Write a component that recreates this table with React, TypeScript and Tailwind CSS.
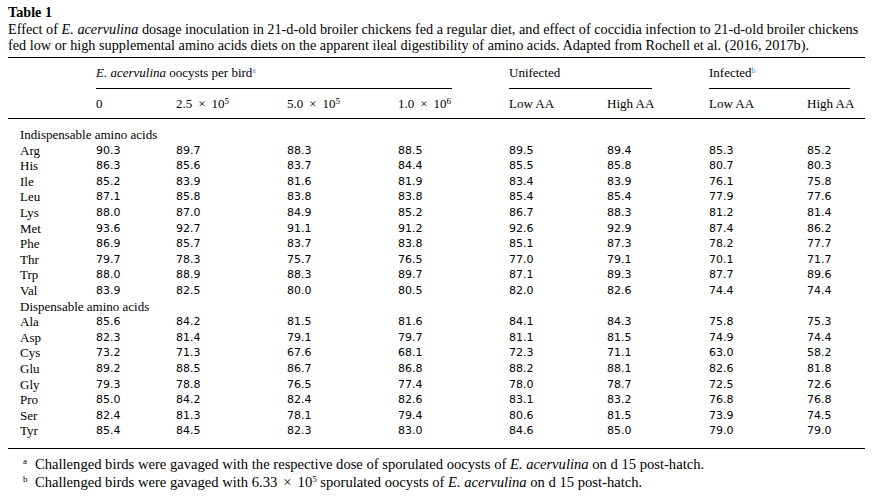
const serif = "font-['Liberation_Serif','Times_New_Roman',serif]";
const sans = "font-['DejaVu_Sans','Verdana',sans-serif]";

const cols = "grid grid-cols-[88px_80px_111px_111px_111px_98px_102px_98px_56px]";

type Row = { label: string; values?: string[] };

const rows: Row[] = [
  { label: "Indispensable amino acids" },
  { label: "Arg", values: ["90.3", "89.7", "88.3", "88.5", "89.5", "89.4", "85.3", "85.2"] },
  { label: "His", values: ["86.3", "85.6", "83.7", "84.4", "85.5", "85.8", "80.7", "80.3"] },
  { label: "Ile", values: ["85.2", "83.9", "81.6", "81.9", "83.4", "83.9", "76.1", "75.8"] },
  { label: "Leu", values: ["87.1", "85.8", "83.8", "83.8", "85.4", "85.4", "77.9", "77.6"] },
  { label: "Lys", values: ["88.0", "87.0", "84.9", "85.2", "86.7", "88.3", "81.2", "81.4"] },
  { label: "Met", values: ["93.6", "92.7", "91.1", "91.2", "92.6", "92.9", "87.4", "86.2"] },
  { label: "Phe", values: ["86.9", "85.7", "83.7", "83.8", "85.1", "87.3", "78.2", "77.7"] },
  { label: "Thr", values: ["79.7", "78.3", "75.7", "76.5", "77.0", "79.1", "70.1", "71.7"] },
  { label: "Trp", values: ["88.0", "88.9", "88.3", "89.7", "87.1", "89.3", "87.7", "89.6"] },
  { label: "Val", values: ["83.9", "82.5", "80.0", "80.5", "82.0", "82.6", "74.4", "74.4"] },
  { label: "Dispensable amino acids" },
  { label: "Ala", values: ["85.6", "84.2", "81.5", "81.6", "84.1", "84.3", "75.8", "75.3"] },
  { label: "Asp", values: ["82.3", "81.4", "79.1", "79.7", "81.1", "81.5", "74.9", "74.4"] },
  { label: "Cys", values: ["73.2", "71.3", "67.6", "68.1", "72.3", "71.1", "63.0", "58.2"] },
  { label: "Glu", values: ["89.2", "88.5", "86.7", "86.8", "88.2", "88.1", "82.6", "81.8"] },
  { label: "Gly", values: ["79.3", "78.8", "76.5", "77.4", "78.0", "78.7", "72.5", "72.6"] },
  { label: "Pro", values: ["85.0", "84.2", "82.4", "82.6", "83.1", "83.2", "76.8", "76.8"] },
  { label: "Ser", values: ["82.4", "81.3", "78.1", "79.4", "80.6", "81.5", "73.9", "74.5"] },
  { label: "Tyr", values: ["85.4", "84.5", "82.3", "83.0", "84.6", "85.0", "79.0", "79.0"] },
];

function Pow({ base, exp }: { base: string; exp: string }) {
  return (
    <span className="whitespace-nowrap">
      {base}
      <span className="mx-[6px]">×</span>
      10<sup className="text-[9px]">{exp}</sup>
    </span>
  );
}

export default function App() {
  return (
    <div className={`w-[875px] h-[499px] bg-white text-black ${serif} text-[13px] px-[8px] pt-[4px] overflow-hidden`}>
      <div className="w-[857px]">
        {/* caption */}
        <div className="text-[14.2px] font-bold leading-[17px]">Table 1</div>
        <div className="text-[14.25px] leading-[16px] whitespace-nowrap">
          <div>
            Effect of <i>E. acervulina</i> dosage inoculation in 21-d-old broiler chickens fed a regular diet, and effect of coccidia infection to 21-d-old broiler chickens
          </div>
          <div>
            fed low or high supplemental amino acids diets on the apparent ileal digestibility of amino acids. Adapted from Rochell et al. (2016, 2017b).
          </div>
        </div>

        {/* table */}
        <div className="mt-[4px] border-t border-black">
          <div className={`${cols} pt-[7px]`}>
            <div />
            <div className="col-span-4 mr-[57px]">
              <div className="leading-[16px] h-[16px]">
                <i>E. acervulina</i> oocysts per bird<sup className="text-[8px] text-[#5b8fc7]">a</sup>
              </div>
              <div className="mt-[7px] border-t border-black" />
            </div>
            <div className="col-span-2 mr-[57px]">
              <div className="leading-[16px] h-[16px]">Unifected</div>
              <div className="mt-[7px] border-t border-black" />
            </div>
            <div className="col-span-2 mr-[13px]">
              <div className="leading-[16px] h-[16px]">
                Infected<sup className="text-[8px] text-[#5b8fc7]">b</sup>
              </div>
              <div className="mt-[7px] border-t border-black" />
            </div>
          </div>

          <div className={`${cols} pt-[7px] pb-[6px] leading-[16px] border-b border-black`}>
            <div />
            <div>0</div>
            <Pow base="2.5" exp="5" />
            <Pow base="5.0" exp="5" />
            <Pow base="1.0" exp="6" />
            <div>Low AA</div>
            <div>High AA</div>
            <div>Low AA</div>
            <div>High AA</div>
          </div>

          <div className="pt-[8px] pb-[9px] border-b border-black">
            {rows.map((r) =>
              r.values ? (
                <div key={r.label} className={`${cols} h-[15.6px] leading-[15.6px]`}>
                  <div className="pl-[12px]">{r.label}</div>
                  {r.values.map((v, i) => (
                    <div key={i} className={`${sans} text-[11px]`}>
                      {v}
                    </div>
                  ))}
                </div>
              ) : (
                <div key={r.label} className="h-[15.6px] leading-[15.6px] pl-[12px] whitespace-nowrap">
                  {r.label}
                </div>
              )
            )}
          </div>
        </div>

        {/* footnotes */}
        <div className="pt-[6px] text-[14.6px] leading-[18px] whitespace-nowrap">
          <div>
            <span className="inline-block w-[27px] pl-[15px]">
              <sup className="text-[9px]">a</sup>
            </span>
            Challenged birds were gavaged with the respective dose of sporulated oocysts of <i>E. acervulina</i> on d 15 post-hatch.
          </div>
          <div>
            <span className="inline-block w-[27px] pl-[15px]">
              <sup className="text-[9px]">b</sup>
            </span>
            Challenged birds were gavaged with 6.33<span className="mx-[6px]">×</span>10<sup className="text-[9px]">5</sup> sporulated oocysts of <i>E. acervulina</i> on d 15 post-hatch.
          </div>
        </div>
      </div>
    </div>
  );
}
